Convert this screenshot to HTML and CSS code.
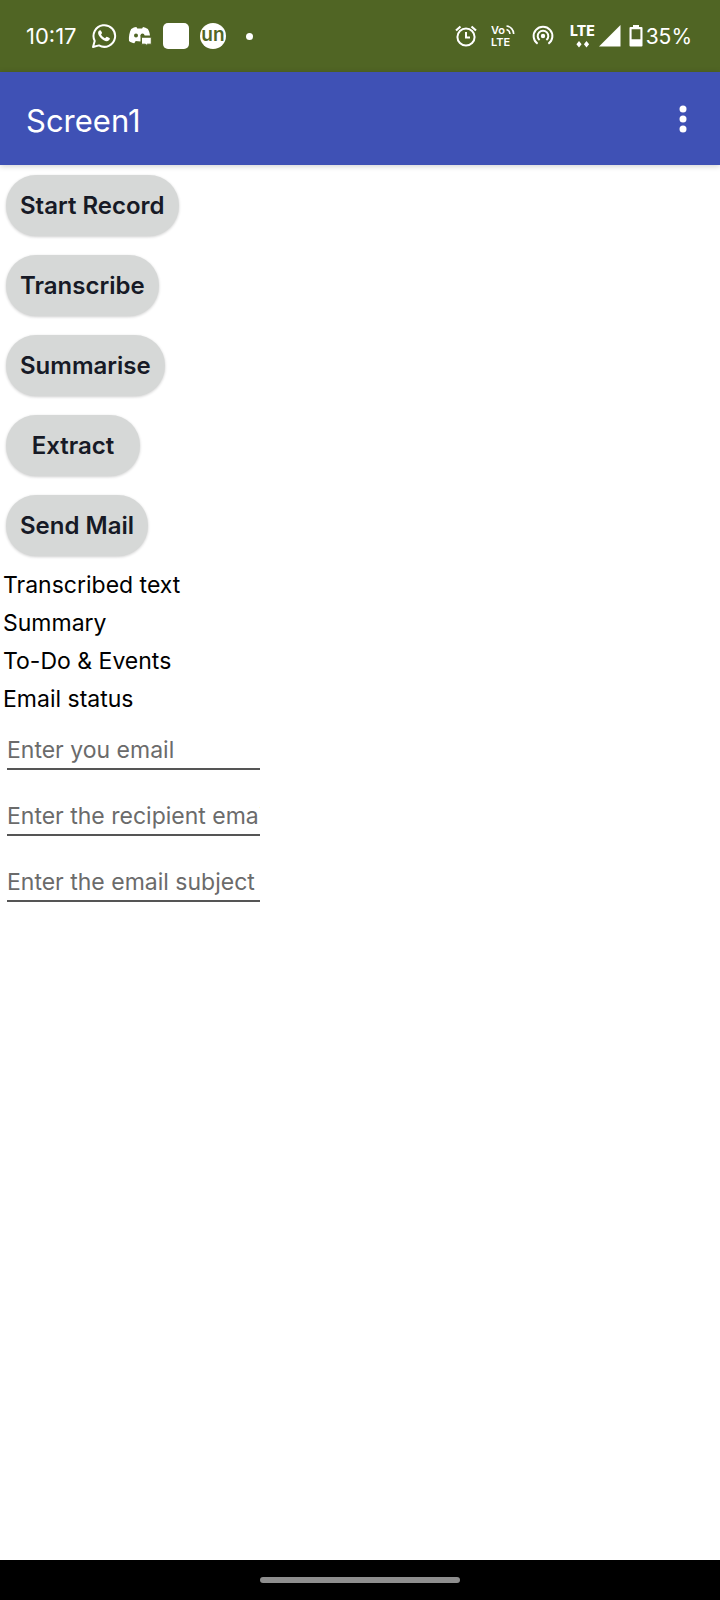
FILE: index.html
```html
<!DOCTYPE html>
<html lang="en">
<head>
<meta charset="utf-8">
<meta name="viewport" content="width=device-width, initial-scale=1">
<title>Screen1</title>
<link rel="stylesheet" href="styles.css">
</head>
<body>
<div class="status-bar">
  <div class="status-left">
    <span class="clock">10:17</span>
    <svg class="icon" width="26" height="26" viewBox="0 0 26 26" fill="none" aria-hidden="true">
      <path d="M2 24l1.700-6.100A10.800 10.800 0 1 1 8 22.400z" stroke="#fff" stroke-width="2" stroke-linejoin="round"/>
      <path d="M9 7.200c-.7 0-1.900 1-1.900 2.800 0 1.800 1.300 3.500 2.700 5 1.900 1.900 4 3.200 5.900 3.200 1.700 0 3.100-1.100 3.200-2.600 0-.4-2.900-2-3.300-1.800-.5.200-1.200 1.500-1.700 1.400-1.300-.5-3.100-2.100-3.800-3.600-.1-.5.900-1.200.9-1.700 0-.5-1-2.700-2-2.700z" fill="#fff"/>
    </svg>
    <svg class="icon" width="24" height="20" viewBox="0 0 24 20" aria-hidden="true">
      <path fill="#fff" d="M8.400 1C6 1.400 4.300 2.200 3.200 3 1.500 6 .6 10.500 1 15c1.800 1.400 3.600 2 5.300 2.300l1.400-2.200 4.800.3V9.600H22C21.800 7 21 4.700 19.900 3 18.300 1.900 16.700 1.300 15 1l-.9 1.500H9.300z"/>
      <circle cx="8" cy="9.500" r="2" fill="#506524"/><circle cx="14.500" cy="9.500" r="2" fill="#506524"/>
      <path fill="#fff" stroke="#506524" stroke-width="1" d="M13.500 11.200h9.800v7H19.500l-2 1.600v-1.600h-4z"/>
    </svg>
    <span class="app-square"></span>
    <span class="app-round">un</span>
    <span class="dot"></span>
  </div>
  <div class="status-right">
    <svg width="22" height="22" viewBox="0 0 22 22" fill="none" stroke="#fff" aria-hidden="true">
      <circle cx="11" cy="12" r="8.600" stroke-width="2"/><path d="M11 7v5.500h4" stroke-width="2"/><path d="M1 5.500L5.500 1.500M21 5.500l-4.500-4" stroke-width="2.200"/>
    </svg>
    <svg class="volte" width="24" height="32" viewBox="0 0 24 32" aria-hidden="true">
      <text x="0" y="14" class="volte-text">Vo</text><text x="0" y="26" class="volte-text">LTE</text>
      <path d="M15.500 9.600a5 5 0 0 1 3.500 4.400M15.500 6a8 8 0 0 1 7.200 8" fill="none" stroke="#fff" stroke-width="1.600"/>
    </svg>
    <svg class="hotspot" width="22" height="22" viewBox="0 0 22 22" fill="none" stroke="#fff" stroke-width="2" aria-hidden="true">
      <circle cx="11" cy="11" r="2.200" fill="#fff" stroke="none"/>
      <path d="M7.600 15.100a5.300 5.300 0 1 1 6.800 0"/><path d="M5.600 18.800a9.400 9.400 0 1 1 10.800 0"/>
    </svg>
    <svg class="lte" width="28" height="32" viewBox="0 0 28 32" aria-hidden="true">
      <text x="0" y="16" class="lte-text">LTE</text>
      <path fill="#fff" d="M9 21l2.600 3.200L9 27.500l-2.600-3.300zM16.500 21l2.600 3.200-2.600 3.300-2.600-3.300z"/>
    </svg>
    <svg class="signal" width="22" height="22" viewBox="0 0 22 22" aria-hidden="true"><path fill="#fff" d="M21.500 0v21.500H0z"/></svg>
    <svg class="battery" width="14" height="22" viewBox="0 0 14 22" aria-hidden="true">
      <path fill="#fff" fill-rule="evenodd" d="M4 0h6v2h2.500q1 0 1 1v17.500q0 1-1 1h-11q-1 0-1-1V3q0-1 1-1H4zM2.600 4.300v10h8.800v-10z"/>
    </svg>
    <span class="percent">35%</span>
  </div>
</div>
<header class="app-bar">
  <h1 class="app-title">Screen1</h1>
  <button class="menu-button" type="button" aria-label="More options">
    <svg width="8" height="28" viewBox="0 0 8 28" fill="#fff" aria-hidden="true"><circle cx="4" cy="4" r="3.500"/><circle cx="4" cy="14" r="3.500"/><circle cx="4" cy="24" r="3.500"/></svg>
  </button>
</header>
<main class="content">
  <div class="actions">
    <button class="action" type="button">Start Record</button>
    <button class="action" type="button">Transcribe</button>
    <button class="action" type="button">Summarise</button>
    <button class="action" type="button">Extract</button>
    <button class="action" type="button">Send Mail</button>
  </div>
  <div class="labels">
    <p class="label">Transcribed text</p>
    <p class="label">Summary</p>
    <p class="label">To-Do &amp; Events</p>
    <p class="label">Email status</p>
  </div>
  <form class="fields">
    <input class="field" type="email" placeholder="Enter you email" aria-label="Enter you email">
    <input class="field" type="email" placeholder="Enter the recipient email" aria-label="Enter the recipient email">
    <input class="field" type="text" placeholder="Enter the email subject" aria-label="Enter the email subject">
  </form>
</main>
<footer class="nav-bar"><span class="nav-handle"></span></footer>
</body>
</html>
```
FILE: styles.css
```css
* { box-sizing: border-box; }
body {
  margin: 0;
  min-height: 100vh;
  display: flex;
  flex-direction: column;
  background: #fff;
  color: #000;
  font-family: Inter, "Open Sans", sans-serif;
  font-size: 23px;
}
.status-bar {
  display: flex;
  justify-content: space-between;
  align-items: center;
  height: 72px;
  padding: 0 28px 0 26px;
  background: #506524;
  color: #fff;
  font-size: 22px;
}
.status-left, .status-right { display: flex; align-items: center; }
.status-left { gap: 11px; }
.clock { width: 54px; }
.app-square { width: 26px; height: 26px; border-radius: 5px; background: #fff; }
.app-round {
  width: 26px;
  height: 26px;
  border-radius: 50%;
  background: #fff;
  color: #506524;
  font-size: 19px;
  font-weight: 600;
  line-height: 24px;
  text-align: center;
}
.dot { width: 7px; height: 7px; margin-left: 9px; border-radius: 50%; background: #fff; }
.volte { margin-left: 14px; }
.volte-text { font-size: 11px; font-weight: 600; fill: #fff; }
.hotspot { margin-left: 17px; }
.lte { margin-left: 16px; }
.lte-text { font-size: 14px; font-weight: 800; fill: #fff; }
.signal { margin-left: 1px; }
.battery { margin-left: 8px; }
.percent { margin-left: 3px; font-size: 21px; }
.app-bar {
  display: flex;
  justify-content: space-between;
  align-items: center;
  height: 93px;
  padding: 3px 20px 0 26px;
  background: #3f51b5;
  color: #fff;
  box-shadow: 0 1px 6px rgba(0, 0, 0, 0.2);
}
.app-title { margin: 0; font-size: 31px; font-weight: 400; }
.menu-button {
  display: flex;
  justify-content: center;
  width: 34px;
  padding: 8px 0 10px;
  border: 0;
  background: none;
}
.content { flex: 1; padding: 10px 3px; }
.actions {
  display: flex;
  flex-direction: column;
  align-items: flex-start;
  gap: 19px;
  padding: 0 3px;
}
.action {
  min-width: 134px;
  height: 61px;
  padding: 0 14px;
  border: 0;
  border-radius: 30px;
  background: #d6d8d7;
  color: #171a26;
  font: inherit;
  font-size: 24px;
  font-weight: 600;
  box-shadow: 0 1px 3px rgba(0, 0, 0, 0.2);
}
.labels { margin-top: 10px; }
.label { margin: 0; line-height: 38px; }
.fields {
  display: flex;
  flex-direction: column;
  align-items: flex-start;
  gap: 24px;
  margin-top: 10px;
  padding: 0 4px;
}
.field {
  width: 253px;
  height: 42px;
  padding: 4px 0 0;
  border: 0;
  border-bottom: 2px solid #555;
  border-radius: 0;
  background: transparent;
  font: inherit;
}
.field::placeholder { color: #6b6b6b; opacity: 1; }
.nav-bar {
  display: flex;
  justify-content: center;
  align-items: center;
  height: 40px;
  background: #000;
}
.nav-handle { width: 200px; height: 6px; border-radius: 3px; background: #8e8e8e; }
```
